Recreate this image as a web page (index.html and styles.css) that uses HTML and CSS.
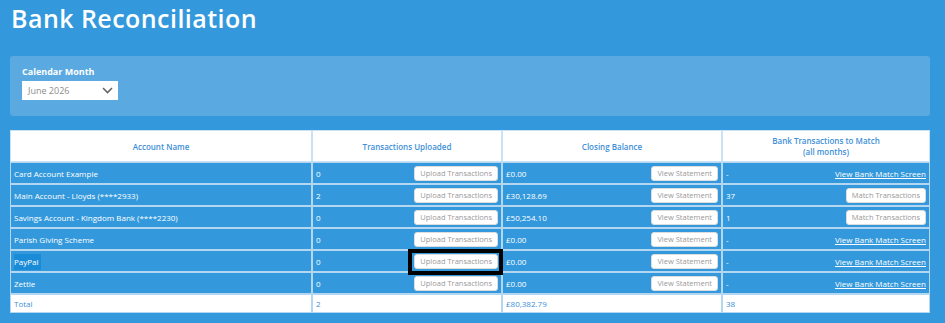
FILE: index.html
```html
<!DOCTYPE html>
<html>
    <head>
        <title>Bank Reconciliation</title>
        <link rel="stylesheet" href="styles.css">
    </head>
    <body>
        <h1 class="title">Bank Reconciliation</h1>
        <div class="filter">
            <div class="label">Calendar Month</div>
            <div class="select">
                <span>June 2026</span>
                <svg class="chevron" width="11" height="7" viewBox="0 0 11 7"><path d="M1 1 L5.5 5.5 L10 1" fill="none" stroke="#666" stroke-width="1.6"/></svg>
            </div>
        </div>
        <table class="accounts">
            <thead>
                <tr>
                    <th class="c1">Account Name</th>
                    <th class="c2">Transactions Uploaded</th>
                    <th class="c3">Closing Balance</th>
                    <th class="c4">Bank Transactions to Match<br>(all months)</th>
                </tr>
            </thead>
            <tbody>
                <tr>
                    <td>Card Account Example</td>
                    <td><div class="cell"><span>0</span><button class="btn">Upload Transactions</button></div></td>
                    <td><div class="cell"><span>£0.00</span><button class="btn">View Statement</button></div></td>
                    <td><div class="cell"><span>-</span><a class="link" href="#">View Bank Match Screen</a></div></td>
                </tr>
                <tr>
                    <td>Main Account - Lloyds (****2933)</td>
                    <td><div class="cell"><span>2</span><button class="btn">Upload Transactions</button></div></td>
                    <td><div class="cell"><span>£30,128.69</span><button class="btn">View Statement</button></div></td>
                    <td><div class="cell"><span>37</span><button class="btn">Match Transactions</button></div></td>
                </tr>
                <tr>
                    <td>Savings Account - Kingdom Bank (****2230)</td>
                    <td><div class="cell"><span>0</span><button class="btn">Upload Transactions</button></div></td>
                    <td><div class="cell"><span>£50,254.10</span><button class="btn">View Statement</button></div></td>
                    <td><div class="cell"><span>1</span><button class="btn">Match Transactions</button></div></td>
                </tr>
                <tr>
                    <td>Parish Giving Scheme</td>
                    <td><div class="cell"><span>0</span><button class="btn">Upload Transactions</button></div></td>
                    <td><div class="cell"><span>£0.00</span><button class="btn">View Statement</button></div></td>
                    <td><div class="cell"><span>-</span><a class="link" href="#">View Bank Match Screen</a></div></td>
                </tr>
                <tr>
                    <td><span class="marked">PayPal</span></td>
                    <td><div class="cell"><span>0</span><button class="btn focus">Upload Transactions</button></div></td>
                    <td><div class="cell"><span>£0.00</span><button class="btn">View Statement</button></div></td>
                    <td><div class="cell"><span>-</span><a class="link" href="#">View Bank Match Screen</a></div></td>
                </tr>
                <tr>
                    <td>Zettle</td>
                    <td><div class="cell"><span>0</span><button class="btn">Upload Transactions</button></div></td>
                    <td><div class="cell"><span>£0.00</span><button class="btn">View Statement</button></div></td>
                    <td><div class="cell"><span>-</span><a class="link" href="#">View Bank Match Screen</a></div></td>
                </tr>
            </tbody>
            <tfoot>
                <tr>
                    <td>Total</td>
                    <td>2</td>
                    <td>£80,382.79</td>
                    <td>38</td>
                </tr>
            </tfoot>
        </table>
    </body>
</html>
```

FILE: styles.css
```css
body {
    margin: 0;
    padding: 0 15px 0 10px;
    background: #3399dc;
    font-family: "Open Sans", sans-serif;
    color: #fff;
}
.title {
    margin: 2px 0 22px 1px;
    font-size: 25px;
    font-weight: 600;
    line-height: 32px;
    letter-spacing: 0.45px;
}
.filter {
    background: #5aa9e0;
    border-radius: 3px;
    padding: 10px 12px 16px;
}
.label {
    font-size: 9px;
    font-weight: 700;
    line-height: 12px;
    margin-bottom: 3px;
}
.select {
    width: 96px;
    height: 19px;
    box-sizing: border-box;
    background: #fff;
    color: #8c8c8c;
    font-size: 9px;
    display: flex;
    align-items: center;
    justify-content: space-between;
    padding: 0 5px 0 6px;
}
.accounts {
    margin-top: 14px;
    width: 920px;
    border-collapse: separate;
    border-spacing: 0;
    font-size: 8px;
    table-layout: fixed;
}
.c1 { width: 300px; }
.c2 { width: 188px; }
.c3 { width: 218px; }
.accounts th {
    background: #fff;
    color: #3d8fd8;
    font-weight: 600;
    height: 30px;
    padding: 0;
    line-height: 11px;
    border: 1px solid #c9e2f4;
}
.accounts td {
    border: 1px solid #b3d6f1;
    padding: 0 3px;
    height: 20px;
    white-space: nowrap;
}
.accounts tfoot td {
    background: #fff;
    color: #3d8fd8;
    height: 17px;
}
.cell {
    display: flex;
    align-items: center;
    justify-content: space-between;
}
.btn {
    font-family: "Open Sans", sans-serif;
    font-size: 7.5px;
    color: #999;
    background: #fff;
    border: 1px solid #ddd;
    border-radius: 3px;
    height: 15px;
    padding: 0 5px;
    line-height: 13px;
}
.focus {
    position: relative;
}
.focus::after {
    content: "";
    position: absolute;
    top: -6px;
    bottom: -7px;
    left: -7px;
    right: -6px;
    border: 4px solid #000;
}
.link {
    color: #fff;
    text-decoration: underline;
}
.marked {
    background: #1a8bd6;
    padding: 2px 2px 3px 0;
}
```
